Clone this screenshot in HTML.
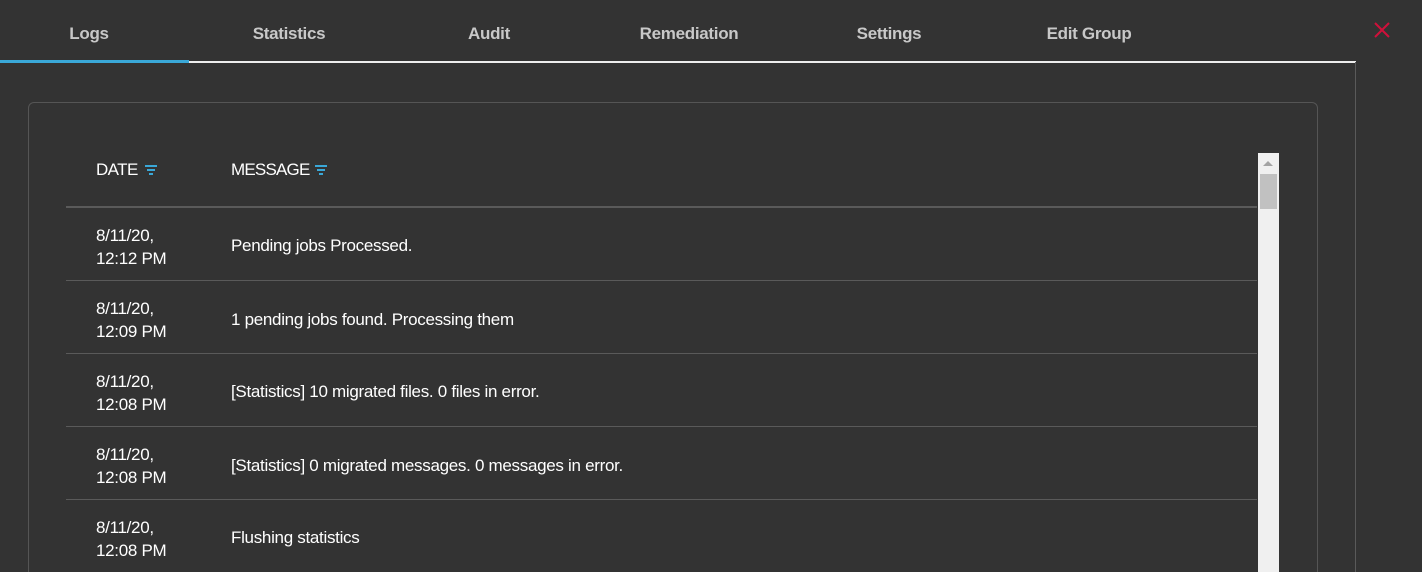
<!DOCTYPE html>
<html><head><style>
html,body{margin:0;width:1422px;height:572px;overflow:hidden}
body{background:#333;font-family:"Liberation Sans",sans-serif;position:relative}
.tab{position:absolute;top:24px;font-size:17px;font-weight:bold;color:#c8c8c8;transform:translateX(-50%);letter-spacing:-0.3px}
.t{position:absolute;color:#fff;font-size:17px;letter-spacing:-0.3px}
.line{position:absolute;left:66px;width:1191px;height:1px;background:#5a5a5a}
</style></head><body>
<div class="tab" style="left:89px">Logs</div>
<div class="tab" style="left:289px">Statistics</div>
<div class="tab" style="left:489px">Audit</div>
<div class="tab" style="left:689px">Remediation</div>
<div class="tab" style="left:889px">Settings</div>
<div class="tab" style="left:1089px">Edit Group</div>
<div style="position:absolute;left:0;top:61px;width:1356px;height:2px;background:#eee"></div>
<div style="position:absolute;left:0;top:60px;width:189px;height:3px;background:#3aa8d8"></div>
<div style="position:absolute;left:1355px;top:62px;width:1px;height:510px;background:#5a5a5a"></div>
<svg style="position:absolute;left:1373px;top:21px" width="18" height="18"><path d="M2 2L16 16M16 2L2 16" stroke="#d0103a" stroke-width="2"/></svg>
<div style="position:absolute;left:28px;top:102px;width:1288px;height:480px;border:1px solid #555;border-radius:6px"></div>
<div class="t" style="left:96px;top:160px;letter-spacing:-0.6px">DATE</div>
<svg style="position:absolute;left:144px;top:164px" width="14" height="12"><path d="M1 2H13M3 6H11M5 10H9" stroke="#3aa8d8" stroke-width="2"/></svg>
<div class="t" style="left:231px;top:160px;letter-spacing:-0.8px">MESSAGE</div>
<svg style="position:absolute;left:314px;top:164px" width="14" height="12"><path d="M1 2H13M3 6H11M5 10H9" stroke="#3aa8d8" stroke-width="2"/></svg>
<div class="line" style="top:206px;height:2px"></div>
<div class="line" style="top:280px"></div>
<div class="line" style="top:353px"></div>
<div class="line" style="top:426px"></div>
<div class="line" style="top:499px"></div>
<div class="t" style="left:96px;top:224px;line-height:23px">8/11/20,<br>12:12 PM</div>
<div class="t" style="left:231px;top:236px">Pending jobs Processed.</div>
<div class="t" style="left:96px;top:297px;line-height:23px">8/11/20,<br>12:09 PM</div>
<div class="t" style="left:231px;top:310px">1 pending jobs found. Processing them</div>
<div class="t" style="left:96px;top:370px;line-height:23px">8/11/20,<br>12:08 PM</div>
<div class="t" style="left:231px;top:382px">[Statistics] 10 migrated files. 0 files in error.</div>
<div class="t" style="left:96px;top:443px;line-height:23px">8/11/20,<br>12:08 PM</div>
<div class="t" style="left:231px;top:456px">[Statistics] 0 migrated messages. 0 messages in error.</div>
<div class="t" style="left:96px;top:516px;line-height:23px">8/11/20,<br>12:08 PM</div>
<div class="t" style="left:231px;top:528px">Flushing statistics</div>
<div style="position:absolute;left:1258px;top:153px;width:21px;height:419px;background:#f0f0f0"></div>
<div style="position:absolute;left:1260px;top:174px;width:17px;height:35px;background:#c1c1c1"></div>
<svg style="position:absolute;left:1263px;top:160px" width="10" height="6"><path d="M0 6L5 1L10 6Z" fill="#a3a3a3"/></svg>
</body></html>
